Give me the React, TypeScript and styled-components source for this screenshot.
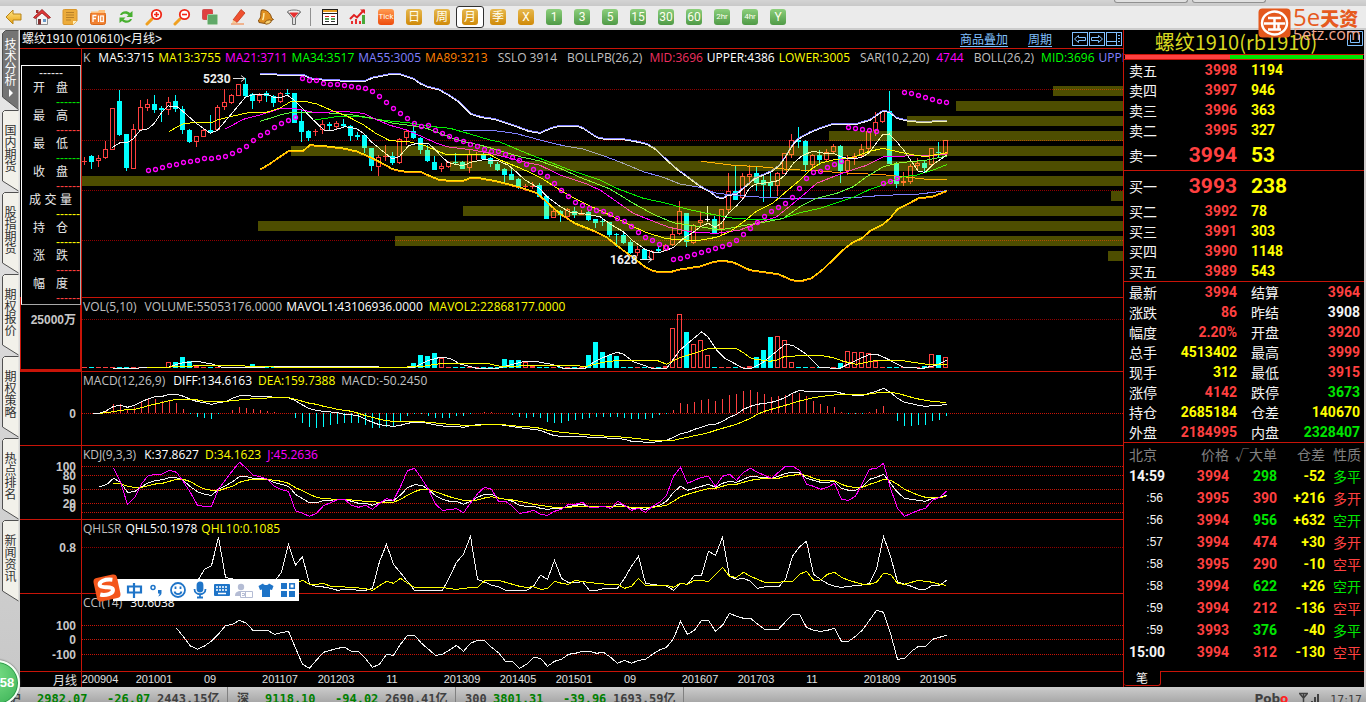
import React from 'react';
import styled, { createGlobalStyle } from 'styled-components';

const RED_LINE = '#c81408';
const UP = '#ff4040';
const DOWN = '#00e600';
const YELLOW = '#ffff00';
const WHITE = '#f4f4f4';
const GREY = '#c0c0c0';
const CYAN = '#00ffff';
const MAGENTA = '#ff00ff';
const BLUE = '#8080ff';
const CJK = "'Noto Sans CJK SC'";

const GlobalStyle = createGlobalStyle`
  * { box-sizing: border-box; }
  body {
    margin: 0;
    overflow: hidden;
    background: #c8c8c8;
    font-family: 'Liberation Sans', ${CJK}, sans-serif;
    font-size: 12px;
  }
  button { margin: 0; padding: 0; border: 0; background: none; font: inherit; color: inherit; }
  table { border-collapse: collapse; }
  th, td { padding: 0; font-weight: inherit; text-align: left; }
  svg { display: block; }
`;

/* ---------- series data: horizontal unit is one candle, vertical unit a third of a pixel ---------- */

type Candle = [kind: 'r' | 'c' | 'w', high: number, top: number, bottom: number, low: number];

const CANDLES: Candle[] = `r291,302,304,315 c284,288,306,327 r285,293,303,321 r243,267,293,298 r145,145,269,269
c90,123,225,228 c222,222,324,333 r192,206,328,328 r120,142,211,214 r117,132,143,153 c105,132,150,159 c138,143,150,186
r111,127,150,165 c105,123,147,156 c139,147,210,222 c208,210,246,249 r228,229,245,261 r207,211,230,232 c165,210,216,219
r135,142,211,213 r87,127,142,150 r102,106,128,132 r72,73,107,108 c54,72,108,112 c99,102,123,147 r99,104,122,129
c93,99,108,126 c105,108,129,141 r96,100,127,130 c87,99,102,108 c99,99,189,189 c150,183,216,246 c210,213,234,243
r207,214,217,228 r180,193,209,222 c186,192,198,213 r183,190,200,207 c177,192,198,201 c195,198,228,243 c216,225,231,240
c225,225,264,280 c264,264,318,333 r285,291,320,348 r255,289,292,303 c276,288,309,315 r234,238,308,312 r210,212,233,255
c195,213,234,237 c231,234,270,282 c255,270,303,306 c288,306,330,330 r309,318,326,336 r303,307,320,324 c279,305,309,312
c303,306,327,328 r270,283,325,339 r276,281,286,300 c280,282,297,300 c290,294,312,321 c307,312,330,333 c324,327,345,369
c327,342,360,361 c354,357,384,387 r372,378,381,393 r366,377,380,387 c369,375,410,411 c408,408,477,477 r440,453,473,474
c450,453,465,486 r445,448,471,474 c441,453,465,474 r450,458,464,465 c450,456,480,483 c477,477,489,504 c474,483,486,498
c486,486,525,531 c519,522,525,561 c513,525,549,552 c540,546,579,582 r558,568,578,588 c567,567,600,600 r570,572,599,600
c561,566,573,579 r553,554,572,573 r501,523,554,558 r423,454,521,525 c459,459,546,561 r492,495,548,552 r456,481,490,498
w438,476,480,486 c468,477,519,522 r447,448,508,525 r339,394,449,456 c318,393,420,420 r339,349,415,420 r315,343,352,375
c320,339,369,392 c348,360,375,426 c333,366,378,411 r336,340,377,408 r279,280,341,342 r222,241,284,294 c201,240,246,264
c240,243,315,336 r282,286,314,324 c270,285,300,315 r267,277,299,306 r252,259,277,282 c255,258,333,369 r285,300,334,345
r279,287,293,315 r252,268,289,294 r213,214,268,279 r156,187,214,228 r153,154,187,190 c93,153,312,312 c306,310,372,384
r336,364,370,378 r312,319,365,372 r294,310,318,330 c300,309,324,336 r264,265,315,318 c246,276,279,291 r240,241,283,288`
  .split(/\s+/)
  .map((s) => [s[0], ...s.slice(1).split(',').map(Number)] as unknown as Candle);

const PRICE_LINES: { color: string; dy?: number; d: string }[] = [
  { color: BLUE, d: '1149,212 1240,212 1260,214 1310,221 1380,240 1450,257 1510,267 1570,287 1630,310 1690,335 1750,352 1800,372 1860,382 1910,400 1960,405 2020,410 2110,415 2260,415 2320,413 2410,406 2510,403 2600,392' },
  { color: '#ff9000', d: '1863,304 1960,316 2040,320 2120,328 2220,333 2280,338 2410,344 2470,350 2540,358 2600,358' },
  { color: '#00f000', d: '706,180 780,168 840,170 920,182 1000,190 1060,200 1110,205 1170,222 1230,240 1260,246 1340,280 1410,307 1470,330 1560,360 1610,385 1690,415 1760,430 1820,447 1880,460 1960,475 2050,480 2100,478 2160,458 2220,445 2280,425 2320,412 2370,388 2400,378 2460,352 2510,345 2560,330 2600,314' },
  { color: '#60f840', d: '541,184 600,165 640,156 700,156 760,160 820,165 880,175 940,190 980,195 1040,205 1100,228 1140,242 1200,255 1260,272 1320,290 1380,303 1440,325 1500,352 1590,387 1660,430 1720,463 1780,488 1860,500 1920,510 2000,495 2060,485 2110,475 2160,440 2210,415 2270,400 2320,380 2360,350 2410,320 2460,308 2540,300 2600,288' },
  { color: MAGENTA, d: '436,207 490,178 540,165 600,146 640,145 700,157 800,155 850,160 880,175 930,196 980,210 1020,227 1070,250 1100,260 1180,270 1230,280 1260,287 1320,303 1380,316 1440,345 1520,372 1560,390 1610,425 1660,460 1710,480 1770,503 1840,517 1910,520 1980,510 2030,490 2090,470 2140,430 2170,405 2210,370 2260,350 2300,335 2360,316 2410,290 2600,284' },
  { color: YELLOW, d: '268,214 310,191 350,187 395,189 410,180 455,169 510,157 560,157 600,144 630,126 670,123 710,132 760,153 800,168 850,194 890,222 930,242 985,245 1030,255 1070,272 1100,284 1230,284 1260,300 1310,320 1340,333 1380,352 1440,390 1480,413 1535,440 1610,475 1660,500 1700,518 1760,536 1850,542 1910,532 1950,515 1990,486 2030,453 2080,428 2130,385 2160,360 2190,330 2220,310 2260,300 2320,292 2365,275 2408,265 2440,272 2490,283 2535,290 2600,278' },
  { color: WHITE, d: '97,262 120,248 140,249 160,236 181,211 205,206 223,190 244,159 265,138 290,139 310,155 330,173 349,190 391,220 412,211 433,187 454,162 475,137 496,112 517,105 560,102 580,112 600,113 622,106 640,118 664,142 700,180 733,211 755,212 795,200 830,206 850,220 874,245 916,280 937,297 958,290 985,258 1010,250 1045,250 1065,268 1085,290 1105,308 1147,317 1175,306 1210,299 1255,302 1285,316 1310,337 1335,360 1378,385 1399,408 1441,440 1470,456 1510,461 1560,470 1595,495 1630,515 1660,543 1695,568 1720,577 1740,577 1780,563 1810,535 1835,520 1865,498 1885,490 1905,502 1924,490 1945,460 1970,437 1990,415 2008,385 2025,373 2060,368 2095,362 2115,345 2140,310 2165,288 2197,274 2235,280 2265,282 2290,293 2320,297 2345,292 2365,280 2385,255 2408,224 2428,222 2450,245 2475,275 2495,305 2515,334 2535,337 2560,313 2600,285' },
];

const BOLL_UPPER = '541,42 563,39 590,42 668,42 690,53 710,56 780,60 840,62 858,60 878,51 920,43 940,39 962,42 1000,54 1020,68 1040,78 1075,86 1100,100 1135,122 1172,160 1205,170 1240,175 1260,181 1310,198 1345,211 1380,217 1410,204 1440,195 1490,195 1510,203 1550,230 1580,236 1635,237 1660,241 1700,250 1725,265 1760,298 1790,325 1820,347 1860,377 1890,393 1910,409 1928,414 1942,404 1970,400 2000,374 2025,353 2075,332 2098,315 2115,290 2140,250 2155,235 2190,215 2220,203 2260,190 2300,192 2335,189 2370,178 2410,150 2430,156 2450,172 2480,180 2515,184 2600,182';
const BOLL_LOWER = '541,327 570,310 600,289 625,272 668,272 690,254 740,258 790,264 830,273 870,290 900,305 935,325 960,332 1000,335 1025,336 1050,347 1075,357 1105,361 1150,361 1170,353 1190,352 1240,361 1260,365 1320,381 1370,398 1400,425 1440,460 1485,489 1540,511 1580,531 1630,570 1665,595 1690,616 1715,630 1740,636 1770,635 1800,627 1860,618 1900,605 1925,600 1960,606 2010,629 2095,641 2135,659 2160,663 2195,653 2225,630 2260,598 2290,568 2320,545 2345,534 2370,512 2410,491 2430,474 2452,447 2485,430 2515,414 2560,408 2600,392';
PRICE_LINES.push(
  { color: BLUE, dy: 0, d: BOLL_UPPER },
  { color: WHITE, dy: 1, d: BOLL_UPPER },
  { color: '#ff9000', dy: 1, d: BOLL_LOWER },
  { color: '#ffe000', dy: 0, d: BOLL_LOWER },
);

const SAR_START = 9;
const SAR = [331,328,322,316,312,307,304,301,295,293,292,287,279,271,259,241,226,215,200,190,179,170,55,60,61,68,71,73,76,79,82,85,94,109,127,145,160,175,189,197,196,209,218,229,238,243,252,259,268,273,274,281,292,300,313,326,337,349,370,391,409,425,436,443,451,452,463,475,484,499,515,530,541,553,562,598,595,589,583,577,571,565,559,553,541,523,505,487,469,454,442,430,412,385,355,335,334,322,313,304,202,205,208,211,214,368,362,353,95,100,106,112,118,124,127];

const PRICE_BANDS: [x: number, y: number][] = [
  [1053, 86], [956, 101], [907, 116], [829, 131], [291, 146], [450, 161], [82, 176], [1111, 191], [463, 206], [258, 221], [395, 236], [1108, 251],
];

const VOLUME: Record<number, number> = {
  12: 6, 13: 6, 14: 11, 15: 7, 16: 2, 24: 4, 25: 2, 36: 2, 38: 2, 47: 5, 48: 13, 49: 12, 50: 15, 51: 10, 60: 9, 61: 8, 62: 8, 63: 6, 64: 2,
  72: 13, 73: 26, 74: 16, 75: 13, 76: 12, 83: 2, 84: 40, 85: 54, 86: 36, 87: 24, 88: 28, 89: 13, 95: 2, 96: 11, 97: 18, 98: 31, 99: 32,
  100: 28, 101: 6, 108: 5, 109: 17, 110: 16, 111: 16, 112: 15, 113: 7, 120: 2, 121: 14, 122: 13, 123: 11,
};
const VOLUME_KIND: Record<number, 'r' | 'c'> = { 15: 'c', 63: 'r', 64: 'r', 88: 'r', 89: 'r' };
const MAVOL1 = '100,205 260,203 300,190 350,184 400,193 430,203 610,200 810,201 840,199 920,202 1000,203 1040,183 1080,172 1110,175 1140,192 1190,205 1250,206 1290,195 1330,185 1365,184 1420,194 1450,205 1515,205 1545,184 1580,168 1610,157 1630,162 1660,185 1690,195 1715,205 1760,205 1800,150 1865,95 1885,112 1910,150 1935,175 1990,205 2015,205 2050,187 2115,133 2138,136 2175,160 2220,203 2280,205 2310,190 2370,162 2390,163 2415,173 2470,202 2530,205 2570,195 2600,181';
const MAVOL2 = '200,204 340,198 450,196 540,200 620,202 900,203 1020,200 1080,191 1200,190 1230,192 1260,199 1450,196 1520,199 1570,187 1615,181 1730,181 1760,193 1800,173 1885,146 1970,146 1990,158 2015,176 2070,184 2090,180 2115,169 2220,166 2260,173 2290,184 2330,193 2390,181 2460,181 2500,187 2540,193 2600,193';

const DIFF = [340,340,332,319,316,322,316,305,296,290,289,283,283,289,298,305,308,313,308,305,295,287,286,289,289,289,292,292,293,302,315,326,331,334,336,338,343,344,348,358,367,374,377,379,376,370,367,367,370,375,378,379,379,382,377,374,374,374,374,376,380,383,386,388,391,400,407,409,409,409,409,412,412,413,415,415,418,424,424,427,427,424,421,412,401,397,388,382,374,373,364,352,343,328,319,313,310,307,301,292,280,271,274,274,274,274,274,280,284,286,286,280,274,265,277,295,307,311,316,319,317,316,313];
const DEA = [340,338,335,331,329,328,323,317,312,307,302,298,298,298,300,304,305,305,304,302,300,298,296,295,294,293,293,293,298,304,310,313,319,323,328,331,334,340,347,352,358,362,364,365,365,364,365,367,369,371,373,374,376,376,376,374,374,374,375,377,379,380,382,385,391,394,397,399,401,403,405,406,408,409,410,412,414,416,419,421,421,421,421,416,412,407,403,398,391,385,379,373,364,355,343,334,328,322,316,310,303,298,293,290,287,285,284,284,283,283,282,279,277,277,280,286,292,297,301,304,306,307];
const HIST = [0,0,0,2,9,9,4,6,11,14,14,12,12,10,4,-1,-4,-5,-6,-1,0,3,6,5,4,3,2,1,0,0,-5,-10,-14,-15,-14,-12,-11,-10,-10,-10,-12,-15,-15,-14,-13,-8,-3,-1,-1,-3,-5,-5,-5,-3,-3,-1,0,1,1,0,0,-2,-4,-5,-4,-5,-9,-10,-10,-8,-7,-6,-5,-4,-4,-4,-4,-5,-6,-6,-6,-5,-2,-1,3,10,9,11,13,14,12,14,18,19,22,23,21,19,16,17,18,19,20,17,12,9,7,6,1,-1,-1,-1,1,4,7,0,-8,-13,-13,-12,-12,-8,-7,-3];

const KDJ_K = [560,554,535,547,577,575,560,548,542,539,533,533,542,560,575,583,586,568,557,545,530,530,535,536,538,548,553,559,583,596,608,608,602,601,598,598,604,610,610,616,608,601,602,585,563,554,556,568,587,598,604,604,613,604,592,583,583,594,598,604,616,619,619,625,628,625,625,620,616,613,620,620,619,625,613,616,625,625,628,622,616,604,577,559,571,565,559,553,562,550,544,547,538,529,531,532,535,529,520,517,519,535,541,547,547,544,565,571,571,559,538,532,523,550,577,595,598,601,604,595,592,586];
const KDJ_D = [550,551,559,562,562,557,552,550,544,538,538,545,557,567,571,572,565,559,547,541,538,538,538,541,544,550,563,572,583,592,596,597,598,599,600,602,604,605,607,607,607,598,586,575,568,569,575,583,590,596,601,601,600,594,590,594,598,600,604,608,613,616,619,622,622,622,620,619,619,619,619,619,619,619,622,622,622,622,619,616,604,590,583,577,571,566,565,559,553,553,547,541,538,535,535,535,529,526,523,526,535,541,542,543,553,560,562,562,553,547,538,541,553,568,577,586,592,592,592,590];
const KDJ_J = [505,545,614,593,551,526,524,522,511,517,545,578,616,619,619,567,540,512,487,505,526,530,538,559,569,574,632,640,649,640,617,608,599,598,616,622,616,628,610,596,601,560,512,505,535,568,613,631,629,626,638,610,581,562,568,604,604,619,640,637,631,643,646,634,628,613,613,607,622,622,619,625,604,616,631,625,637,619,607,586,529,502,550,541,532,529,559,529,523,541,517,505,517,526,535,517,499,499,511,553,559,568,562,550,598,601,589,550,508,505,490,565,625,649,640,631,625,601,592,574];

const QHL5 = [865,843,808,797,712,832,837,860,862,862,862,860,845,817,733,795,770,852,860,861,865,871,868,868,871,871,865,785,733,793,818,845,871,871,871,871,871,832,787,763,709,838,846,856,860,871,871,871,871,859,826,838,781,835,848,848,845,871,871,866,866,865,835,799,769,850,853,856,858,871,850,853,826,826,754,766,712,829,838,835,844,865,861,859,861,838,769,740,724,823,838,851,859,862,859,857,855,850,808,709,769,846,853,859,868,868,856,856,841];
const QHL10 = [850,850,841,853,853,850,859,859,861,863,864,866,871,857,844,850,835,850,862,862,862,862,862,866,868,865,863,862,843,841,841,847,853,859,862,860,868,866,844,850,853,841,845,847,850,852,853,853,865,859,835,856,856,856,856,862,850,853,841,842,844,823,802,829,832,817,829,838,847,847,847,844,844,823,814,841,840,823,817,832,841,847,853,853,847,820,823,850,853,847,841,844,847,853,856];
const CCI = [985,1010,1038,1048,1038,1023,1002,977,973,961,970,993,991,991,1003,998,994,1044,1093,1105,1080,1057,1051,1045,1042,1054,1054,1076,1102,1093,1063,1066,1033,1006,1006,1030,1048,1066,1063,1050,1036,1054,1030,1021,1021,1042,1058,1084,1084,1105,1093,1072,1075,1099,1084,1078,1063,1060,1054,1054,1060,1057,1072,1090,1081,1090,1081,1078,1063,1050,1042,1016,964,1003,991,961,961,994,976,940,949,955,955,972,988,988,988,965,943,943,982,991,994,991,985,1024,1024,1009,990,961,931,937,1000,1078,1075,1054,1039,1039,1018,1012,1006];

const AXIS_DATES: [x: number, label: string][] = [
  [100, '200904'], [154, '201001'], [210, '09'], [280, '201107'], [336, '201203'], [392, '11'], [462, '201309'], [518, '201405'],
  [574, '201501'], [630, '09'], [700, '201607'], [756, '201703'], [812, '11'], [882, '201809'], [938, '201905'],
];

const candleX = (i: number) => 82 + 7 * i;
const lineX = (i: number) => 85 + 7 * i + 0.5;
const priceY = (v: number) => 60 + Math.round(v / 3);
const studyY = (v: number) => 300 + v / 3;

const seriesPoints = (start: number, values: number[]) =>
  values.map((v, k) => `${lineX(start + k)},${studyY(v).toFixed(1)}`).join(' ');
const freePoints = (d: string, base: number, dy = 0) =>
  d
    .split(' ')
    .map((p) => p.split(',').map(Number))
    .map(([x, y]) => `${(80 + x / 3).toFixed(1)},${(base + y / 3 + dy).toFixed(1)}`)
    .join(' ');

/* ---------- window frame ---------- */

const Window = styled.div`
  display: flex;
  flex-direction: column;
  height: 100vh;
`;
const TopEdge = styled.div`
  flex: 0 0 6px;
  display: flex;
  justify-content: flex-end;
  gap: 4px;
  padding-right: 100px;
  background: linear-gradient(#d4d4d4, #c8c8c8);
`;
const EdgeTab = styled.span`
  width: 74px;
  height: 3px;
  border: solid #909090;
  border-width: 0 1px 1px;
  border-radius: 0 0 4px 4px;
  background: #e0e0e0;
`;
const Toolbar = styled.header`
  flex: 0 0 24px;
  display: flex;
  background: #ebebeb;
  border-bottom: 2px solid #cccccc;
`;
const ToolButton = styled.button<{ $active?: boolean }>`
  width: 28px;
  height: 22px;
  display: flex;
  align-items: center;
  justify-content: center;
  border: 1px solid ${(p) => (p.$active ? '#303030' : 'transparent')};
  border-radius: 3px;
  background: ${(p) => (p.$active ? '#ffffff' : 'transparent')};
`;
const Divider = styled.span`
  width: 1px;
  margin: 2px 5px 2px 2px;
  background: #909090;
`;
const TILE_FILL = {
  gold: 'linear-gradient(#e6b84e, #d08a08)',
  green: 'linear-gradient(#8ccf7c, #4f9a46)',
  orange: 'linear-gradient(#ff9a50, #ee4c0c)',
};
const Tile = styled.span<{ $tone: keyof typeof TILE_FILL; $small?: boolean }>`
  width: 16px;
  height: 16px;
  border-radius: 3px;
  background: ${(p) => TILE_FILL[p.$tone]};
  color: #fffff0;
  font: ${(p) => (p.$small ? 8 : 12)}px/16px 'Roboto', ${CJK}, sans-serif;
  text-align: center;
  white-space: nowrap;
`;
const Body = styled.div`
  flex: 1;
  min-height: 0;
  display: flex;
  padding-right: 2px;
  background: #d0cccc;
`;

/* ---------- left tab rail ---------- */

const TabRail = styled.nav`
  flex: 0 0 20px;
  padding: 0 2px;
  background: linear-gradient(#e8e8e8, #c8c8c8);
`;
const SideTab = styled.button<{ $active?: boolean }>`
  position: relative;
  display: flex;
  flex-direction: column;
  align-items: center;
  width: 16px;
  height: ${(p) => (p.$active ? 80 : 82)}px;
  padding-top: ${(p) => (p.$active ? 8 : 14)}px;
  color: ${(p) => (p.$active ? '#ffffff' : '#303030')};
`;
const TabShape = styled.svg`
  position: absolute;
  inset: 0;
`;
const TabText = styled.span`
  position: relative;
  font: 12px/12px ${CJK}, sans-serif;
  writing-mode: vertical-rl;
`;

/* ---------- chart area ---------- */

const ChartWindow = styled.main`
  flex: 1;
  min-width: 0;
  display: flex;
  flex-direction: column;
  background: #000;
  color: ${GREY};
`;
const ChartTitle = styled.div`
  flex: 0 0 19px;
  display: flex;
  align-items: center;
  justify-content: space-between;
  padding: 0 1px 0 2px;
  border-bottom: 1px solid ${RED_LINE};
  font: 12px/18px ${CJK}, sans-serif;
`;
const Instrument = styled.h1`
  margin: 0;
  font: 12px/18px 'Liberation Sans', ${CJK}, sans-serif;
  color: ${WHITE};
`;
const TitleLinks = styled.div`
  display: flex;
  align-items: center;
  gap: 20px;
  color: #80c0ff;
  a { color: inherit; text-underline-offset: 2px; }
`;
const WindowButtons = styled.span`
  display: flex;
  gap: 1px;
  button { height: 14px; }
`;
const PanelRow = styled.section<{ $height?: number }>`
  flex: ${(p) => (p.$height ? `0 0 ${p.$height}px` : '1')};
  min-height: 0;
  display: flex;
  border-bottom: 1px solid ${RED_LINE};
`;
const AxisCell = styled.div<{ $selected?: boolean }>`
  position: relative;
  flex: 0 0 61px;
  border: ${(p) => (p.$selected ? `solid ${RED_LINE}` : 'none')};
  border-width: 0 1px 2px 1px;
`;
const Plot = styled.div`
  flex: 1;
  min-width: 0;
  min-height: 0;
  display: grid;
  grid-template-rows: minmax(0, 1fr);
  border-left: 1px solid ${RED_LINE};
  overflow: hidden;
  > * { grid-area: 1 / 1; }
`;
const Legend = styled.div`
  position: relative;
  z-index: 1;
  align-self: start;
  display: flex;
  padding-left: 1px;
  font: 12px/18px 'Open Sans', sans-serif;
  white-space: nowrap;
`;
const LegendItem = styled.span<{ $color?: string; $gap?: number }>`
  color: ${(p) => p.$color || GREY};
  margin-right: ${(p) => p.$gap || 4}px;
`;
const Drawing = styled.svg`
  width: 100%;
  height: 100%;
  min-height: 0;
`;
const AxisText = styled.text`
  fill: #c8c8c8;
  font: bold 12px 'Liberation Sans', ${CJK}, sans-serif;
  text-anchor: end;
`;
const PriceTag = styled.text`
  fill: #f0f0f0;
  font: bold 12px 'Roboto', sans-serif;
`;
const DateRow = styled.div`
  flex: 0 0 15px;
  min-height: 0;
  display: flex;
`;
const DateCaption = styled.div`
  flex: 0 0 61px;
  padding-right: 4px;
  text-align: right;
  font: 12px/15px ${CJK}, sans-serif;
  color: #e0e0e0;
`;
const DateText = styled.text`
  fill: #e0e0e0;
  font: 11px 'Liberation Sans', sans-serif;
  text-anchor: middle;
`;

/* ---------- floating data box ---------- */

const DataBox = styled.div`
  position: absolute;
  z-index: 2;
  left: 1px;
  top: 16px;
  width: 60px;
  height: 240px;
  border: 1px solid;
  border-color: #ffffff #a8a8a8 #a8a8a8 #ffffff;
  background: #000;
  color: #e8e8e8;
  font: 12px/14px 'Liberation Sans', ${CJK}, sans-serif;
`;
const Dashes = styled.div<{ $color?: string; $center?: boolean }>`
  line-height: ${(p) => (p.$center ? 14 : 12)}px;
  color: ${(p) => p.$color || '#e8e8e8'};
  text-align: ${(p) => (p.$center ? 'center' : 'right')};
`;
const DataLabel = styled.div`
  display: flex;
  justify-content: space-between;
  width: 43px;
  margin-left: 7px;
  padding: 0 4px;
  line-height: 16px;
  &[data-wide='true'] { padding: 0; }
`;

/* ---------- quote panel ---------- */

const QuotePanel = styled.aside`
  flex: 0 0 241px;
  display: flex;
  flex-direction: column;
  background: #000;
  border-left: 1px solid ${RED_LINE};
  color: ${WHITE};
`;
const QuoteTitle = styled.h2`
  position: relative;
  margin: 0;
  flex: 0 0 24px;
  padding-right: 16px;
  font: 20px/24px ${CJK}, sans-serif;
  color: #d8d820;
  text-align: center;
`;
const RestoreButton = styled.button`
  position: absolute;
  right: 1px;
  top: 1px;
`;
const RatioBar = styled.div`
  flex: 0 0 6px;
  display: flex;
  padding: 0 1px;
  border: solid ${RED_LINE};
  border-width: 1px 0;
`;
const RatioPart = styled.span<{ $grow: number; $color: string }>`
  flex: ${(p) => p.$grow};
  background: ${(p) => p.$color};
`;
const QuoteTable = styled.table`
  width: 100%;
  table-layout: fixed;
  border-bottom: 1px solid ${RED_LINE};
  font: bold 14px/20px 'Roboto', sans-serif;
  th { font: 14px/20px ${CJK}, sans-serif; padding-left: 5px; }
  td + th { padding-left: 14px; }
`;
const QuoteRow = styled.tr<{ $large?: boolean }>`
  height: ${(p) => (p.$large ? 30 : 20)}px;
  td { font-size: ${(p) => (p.$large ? 21 : 14)}px; }
`;
const Figure = styled.td<{ $color: string; $left?: boolean }>`
  color: ${(p) => p.$color};
  && { text-align: ${(p) => (p.$left ? 'left' : 'right')}; }
  padding-left: ${(p) => (p.$left ? 14 : 0)}px;
  white-space: nowrap;
`;
const TickTable = styled.table`
  width: 100%;
  table-layout: fixed;
  font: bold 14px/22px 'Roboto', sans-serif;
  tr { height: 22px; }
  th { font: 14px/22px ${CJK}, sans-serif; color: #808080; text-align: right; white-space: nowrap; }
  th:first-child { text-align: left; padding-left: 5px; }
`;
const TimeCell = styled.td<{ $minor?: boolean }>`
  && { text-align: ${(p) => (p.$minor ? 'right' : 'left')}; }
  padding-left: 5px;
  font: ${(p) => (p.$minor ? "12px/22px 'Liberation Sans'" : "bold 14px/22px 'Roboto'")}, sans-serif;
`;
const NatureCell = styled.td<{ $color: string }>`
  && { text-align: right; }
  padding-right: 3px;
  font: 14px/22px ${CJK}, sans-serif;
  color: ${(p) => p.$color};
`;
const QuoteTabs = styled.div`
  flex: 0 0 16px;
  margin-top: auto;
  display: flex;
`;
const QuoteTab = styled.button`
  width: 37px;
  height: 15px;
  border: solid ${RED_LINE};
  border-width: 0 1px 1px 0;
  border-radius: 0 0 3px 3px;
  font: 12px/14px ${CJK}, sans-serif;
  color: ${WHITE};
`;
const TabLine = styled.span`
  flex: 1;
  border-top: 1px solid ${RED_LINE};
`;

/* ---------- status bar ---------- */

const StatusBar = styled.footer`
  flex: 0 0 15px;
  height: 15px;
  overflow: hidden;
  display: flex;
  justify-content: space-between;
  padding: 0 4px 0 9px;
  background: linear-gradient(#cccccc, #a8a8a8);
  color: #404040;
  font: bold 12px/25px 'DejaVu Sans Mono', ${CJK}, monospace;
`;
const IndexList = styled.div`
  display: flex;
  gap: 9px;
`;
const IndexGroup = styled.div`
  display: grid;
  grid-template-columns: 28px 70px 50px 60px;
  width: 219px;
  height: 25px;
  white-space: nowrap;
  border-right: 1px solid #808080;
`;
const Green = styled.span`
  color: #008000;
`;
const Brand = styled.span`
  display: flex;
  align-items: flex-start;
  gap: 10px;
  font-family: 'DejaVu Sans', sans-serif;
  i { font-style: normal; color: #ff2020; }
  svg { margin-top: 5px; }
  time { font-weight: normal; font-size: 11px; }
`;

/* ---------- things floating above the window ---------- */

const SiteMark = styled.div`
  position: absolute;
  z-index: 5;
  right: 4px;
  top: 8px;
  display: flex;
  gap: 2px;
  color: #e65a1e;
`;
const MarkText = styled.div`
  width: 69px;
  font: 20px/18px 'Open Sans', ${CJK}, sans-serif;
  white-space: nowrap;
  small { display: block; font: 16px/12px 'Open Sans', sans-serif; color: #f0a890; }
  b { font: 900 19px/18px ${CJK}, sans-serif; }
  span { font-size: 24px; }
`;
const ImeBar = styled.div`
  position: absolute;
  z-index: 4;
  left: 93px;
  bottom: 101px;
  width: 206px;
  height: 22px;
  padding-left: 30px;
  display: flex;
  background: linear-gradient(to right, transparent 20px, #ffffff 20px);
  color: #1e74c8;
`;
const ImeButton = styled.button`
  width: 22px;
  height: 22px;
  display: flex;
  align-items: center;
  justify-content: center;
`;
const ImeLogo = styled.svg`
  position: absolute;
  left: -1px;
  top: -6px;
`;
const SpeedBall = styled.button`
  position: absolute;
  z-index: 4;
  left: -26px;
  bottom: -4px;
  width: 46px;
  height: 46px;
  padding-left: 20px;
  border: 2px solid #f4fff4;
  border-radius: 50%;
  box-shadow: 0 0 2px #404040, inset 0 0 0 1px #2c9a48;
  background: radial-gradient(circle at 40% 30%, #7ce088, #38b054);
  color: #ffffff;
  font: bold 13px/42px 'Liberation Sans', sans-serif;
`;

/* ---------- toolbar icons ---------- */

const Icon = ({ children }: { children: React.ReactNode }) => (
  <svg width="18" height="18" viewBox="0 0 18 18" aria-hidden="true">
    <defs>
      <linearGradient id="gold" x1="0" y1="0" x2="0" y2="1">
        <stop offset="0" stopColor="#ffe88a" />
        <stop offset="1" stopColor="#e8a010" />
      </linearGradient>
    </defs>
    {children}
  </svg>
);

const Magnifier = ({ plus }: { plus?: boolean }) => (
  <Icon>
    <path d="M2 16 L7 11" stroke="#f0a020" strokeWidth="3" strokeLinecap="round" />
    <circle cx="11.5" cy="6.5" r="4.7" fill="#fff" stroke="#f02818" strokeWidth="1.8" />
    <path d={plus ? 'M9 6.5H14M11.5 4V9' : 'M9 6.5H14'} stroke="#f02818" strokeWidth="1.6" />
  </Icon>
);

const ICONS: [string, React.ReactNode][] = [
  ['后退', <Icon><path d="M1 9 L8 2 V6 H16 V12 H8 V16 Z" fill="url(#gold)" stroke="#b88418" /></Icon>],
  ['首页', <Icon>
    <path d="M3.500 8.500V16.500H14.500V8.500L9 4Z" fill="#f4f4f4" stroke="#909090" />
    <path d="M3 2H5.500V5H3Z" fill="#a02828" />
    <path d="M0.500 9.500 L9 1.500 L17.500 9.500 L15.500 10.500 L9 5 L2.500 10.500Z" fill="#e03838" stroke="#901818" strokeWidth=".8" />
    <path d="M5 11H8V16.500H5Z" fill="#803030" /><path d="M10 11H13V14H10Z" fill="#6898c8" />
  </Icon>],
  ['公告', <Icon>
    <path d="M2 2.500C2 1.500 3 1.500 3.500 1.500H15C16 1.500 16 2.500 16 3V13L12 16.500H3C2 16.500 2 15.500 2 15Z" fill="#ecac3c" stroke="#d8962c" />
    <path d="M5 4.500H13M5 7H13M5 9.500H13M5 12H10" stroke="#b88028" />
    <path d="M16 13H12V16.500Z" fill="#fff0c0" />
  </Icon>],
  ['F10', <Icon>
    <rect x="1.500" y="4.500" width="15" height="12" rx="2" fill="#f08030" stroke="#d86818" />
    <path d="M2 3.500 H9 L10 2 H16V5H2Z" fill="#ffc078" />
    <path d="M4 14V7.500H7.500M4 10.500H7M9.500 14V7.500" stroke="#fff" strokeWidth="1.300" fill="none" />
    <rect x="11.700" y="8" width="2.600" height="5.500" stroke="#fff" fill="none" strokeWidth="1.200" />
  </Icon>],
  ['刷新', <Icon>
    <path d="M3 7 C4 3 10 2 13 5 L15.500 3V9H9.500L11.500 7 C9 5 6 5.500 5 7Z" fill="#48b030" />
    <path d="M15 11 C14 15 8 16 5 13 L2.500 15V9.500H8.500L6.500 11.500 C9 13.500 12 12.500 13 11Z" fill="#48b030" />
  </Icon>],
  ['放大', <Magnifier plus />],
  ['缩小', <Magnifier />],
  ['叠加', <Icon>
    <rect x="1.500" y="1.500" width="10" height="10" rx="1" fill="#e04040" stroke="#d05050" />
    <rect x="6.500" y="6.500" width="10" height="10" rx="1" fill="#60a868" stroke="#a8d0a8" />
  </Icon>],
  ['画线', <Icon>
    <path d="M4 12 L12 1.500 L16 5 L8 14.500Z" fill="#f05030" stroke="#c03818" strokeWidth=".8" />
    <path d="M4 12L3 15.500L8 14.500Z" fill="#f8c890" />
    <path d="M2 16H15" stroke="#f0a070" strokeWidth="1.500" />
  </Icon>],
  ['预警', <Icon>
    <path d="M4.500 2 C9 1 14 5 14.500 10 L16.500 11.500 L8 15.500 L2 14.500 L1.500 12 C5 10 3 5 4.500 2Z" fill="#e09020" stroke="#885010" />
    <path d="M7 5C6.500 8 7 10 5.500 12" stroke="#ffe8a0" strokeWidth="1.500" fill="none" />
    <ellipse cx="11" cy="14" rx="3.500" ry="1.800" fill="#f8d070" stroke="#885010" strokeWidth=".8" transform="rotate(-22 11 14)" />
  </Icon>],
  ['筛选', <Icon>
    <path d="M2.500 4 L7.500 10V16.500H10.500V10L15.500 4Z" fill="#e0e0e0" stroke="#707070" />
    <ellipse cx="9" cy="4" rx="6.500" ry="2" fill="#f0f0f0" stroke="#707070" />
    <path d="M4.500 4.500H13.500L9.500 9.500H8.500Z" fill="#e83030" />
  </Icon>],
];

const CHART_ICONS: [string, React.ReactNode][] = [
  ['报价', <Icon>
    <rect x="1.500" y="1.500" width="15" height="15" fill="#fff" stroke="#202020" />
    <path d="M2 3H16" stroke="#e8a020" strokeWidth="2" />
    <path d="M2 5.500H16" stroke="#202020" />
    <path d="M4 8.500H8M10 8.500H14" stroke="#d02020" /><path d="M4 11H8M10 11H14" stroke="#209020" strokeWidth="1.500" />
    <path d="M4 13.500H8M10 13.500H14" stroke="#303030" />
  </Icon>],
  ['走势', <Icon>
    <path d="M2 16V13H4V16M6 16V11H8V16M10 16V13H12V16" fill="#e83030" /><path d="M13 16V7H16V16Z" fill="#48a838" />
    <path d="M1 11 L5 7 L8 9.500 L15 2" fill="none" stroke="#e02020" strokeWidth="2" /><path d="M11 1.500H16V6Z" fill="#e02020" />
  </Icon>],
];

const PERIODS: [string, keyof typeof TILE_FILL][] = [
  ['Tick', 'orange'], ['日', 'gold'], ['周', 'gold'], ['月', 'gold'], ['季', 'gold'], ['X', 'gold'],
  ['1', 'green'], ['3', 'green'], ['5', 'green'], ['15', 'green'], ['30', 'green'], ['60', 'green'], ['2hr', 'green'], ['4hr', 'green'], ['Y', 'green'],
];

const SIDE_TABS = ['技术分析', '国内期货', '股指期货', '期权报价', '期权策略', '热点排名', '新闻资讯'];

const DATA_ROWS: [string, string][] = [
  ['开盘', '#00e600'], ['最高', UP], ['最低', '#00e600'], ['收盘', UP], ['成交量', YELLOW], ['持仓', YELLOW], ['涨跌', UP], ['幅度', UP],
];

const ASKS = [['卖五', '3998', '1194'], ['卖四', '3997', '946'], ['卖三', '3996', '363'], ['卖二', '3995', '327'], ['卖一', '3994', '53']];
const BIDS = [['买一', '3993', '238'], ['买二', '3992', '78'], ['买三', '3991', '303'], ['买四', '3990', '1148'], ['买五', '3989', '543']];
const STATS: [string, string, string, string, string, string][] = [
  ['最新', '3994', UP, '结算', '3964', UP],
  ['涨跌', '86', UP, '昨结', '3908', WHITE],
  ['幅度', '2.20%', UP, '开盘', '3920', UP],
  ['总手', '4513402', YELLOW, '最高', '3999', UP],
  ['现手', '312', YELLOW, '最低', '3915', UP],
  ['涨停', '4142', UP, '跌停', '3673', DOWN],
  ['持仓', '2685184', YELLOW, '仓差', '140670', YELLOW],
  ['外盘', '2184995', UP, '内盘', '2328407', DOWN],
];
const TICKS: [string, string, string, string, string, string][] = [
  ['14:59', '3994', '298', DOWN, '-52', '多平'],
  [':56', '3995', '390', UP, '+216', '多开'],
  [':56', '3994', '956', DOWN, '+632', '空开'],
  [':57', '3994', '474', UP, '+30', '多开'],
  [':58', '3995', '290', UP, '-10', '空平'],
  [':58', '3994', '622', DOWN, '+26', '空开'],
  [':59', '3994', '212', UP, '-136', '空平'],
  [':59', '3993', '376', DOWN, '-40', '多平'],
  ['15:00', '3994', '312', UP, '-130', '空平'],
];
const INDICES = [
  ['沪', '2982.07', '-26.07', '2443.15亿'],
  ['深', '9118.10', '-94.02', '2690.41亿'],
  ['300', '3801.31', '-39.96', '1693.59亿'],
];

/* ---------- charts ---------- */

const Grid = ({ ys, strong }: { ys: number[]; strong?: boolean }) => (
  <g stroke={strong ? '#c81408' : '#900000'} strokeDasharray="1 1" shapeRendering="crispEdges">
    {ys.map((y) => <line key={y} x1="82" x2="4000" y1={y + 0.5} y2={y + 0.5} />)}
  </g>
);

const Line = ({ color, points }: { color: string; points: string }) => (
  <polyline points={points} fill="none" stroke={color} strokeWidth="1" shapeRendering="crispEdges" />
);

const Frame = ({ top, label, children }: { top: number; label: string; children: React.ReactNode }) => (
  <Drawing role="img" aria-label={label}>
    <g transform={`translate(-82 ${-top})`}>{children}</g>
  </Drawing>
);

const PriceChart = () => (
  <Frame top={49} label="K线图">
    <Grid ys={[89, 140, 190, 240]} />
    <g shapeRendering="crispEdges">
      {CANDLES.map(([kind, h, t, b, l], i) => {
        const color = kind === 'r' ? UP : kind === 'c' ? CYAN : '#ffffff';
        const x = candleX(i);
        const [yh, yt, yb, yl] = [h, t, b, l].map(priceY);
        const height = Math.max(1, yb - yt);
        return (
          <g key={i}>
            {yt > yh && <rect x={x + 2} y={yh} width="1" height={yt - yh} fill={color} />}
            {yl > yb && <rect x={x + 2} y={yb} width="1" height={yl - yb} fill={color} />}
            {kind === 'r' && height > 2
              ? <rect x={x + 0.5} y={yt + 0.5} width="4" height={height - 1} fill="none" stroke={color} />
              : <rect x={x} y={yt} width="5" height={height} fill={color} />}
          </g>
        );
      })}
    </g>
    {PRICE_LINES.map((l, i) => <Line key={i} color={l.color} points={freePoints(l.d, 60, l.dy)} />)}
    <g fill="rgba(255,255,0,0.3)">
      {PRICE_BANDS.map(([x, y]) => <rect key={y} x={x} y={y} width="4000" height="10" />)}
    </g>
    <g fill="none" stroke={MAGENTA} strokeWidth="1.3">
      {SAR.map((v, k) => <circle key={k} cx={lineX(SAR_START + k)} cy={priceY(v) + 0.5} r="2" />)}
    </g>
    <PriceTag x="203" y="83">5230</PriceTag>
    <path d="M233 78.500H245M241 75.500L245 78.500L241 81.500" stroke="#e0e0e0" fill="none" />
    <PriceTag x="610" y="264">1628</PriceTag>
    <path d="M640 259.500H652M648 256.500L652 259.500L648 262.500" stroke="#e0e0e0" fill="none" />
  </Frame>
);

const VolumeChart = () => (
  <Frame top={298} label="成交量">
    <Grid ys={[319]} />
    <g shapeRendering="crispEdges">
      {CANDLES.map(([candleKind], i) => {
        const kind = VOLUME_KIND[i] || candleKind;
        const color = kind === 'r' ? UP : CYAN;
        const h = VOLUME[i] || 1;
        return kind === 'r' && h > 2
          ? <rect key={i} x={candleX(i) + 0.5} y={368.5 - h} width="4" height={h - 1} fill="none" stroke={color} />
          : <rect key={i} x={candleX(i)} y={368 - h} width="5" height={h} fill={color} />;
      })}
    </g>
    <Line color={WHITE} points={freePoints(MAVOL1, 300)} />
    <Line color={YELLOW} points={freePoints(MAVOL2, 300)} />
  </Frame>
);

const MacdChart = () => (
  <Frame top={372} label="MACD">
    <Grid ys={[413]} strong />
    <g shapeRendering="crispEdges">
      {HIST.map((h, i) => (h === 0 ? null : (
        <rect key={i} x={85 + 7 * i} y={h > 0 ? 413 - h : 413} width="1" height={Math.abs(h)} fill={h > 0 ? UP : CYAN} />
      )))}
    </g>
    <Line color={WHITE} points={seriesPoints(1, DIFF)} />
    <Line color={YELLOW} points={seriesPoints(2, DEA)} />
  </Frame>
);

const KdjChart = () => (
  <Frame top={446} label="KDJ">
    <Grid ys={[466, 475, 489, 503, 512]} strong />
    <Line color={WHITE} points={seriesPoints(2, KDJ_K)} />
    <Line color={YELLOW} points={seriesPoints(4, KDJ_D)} />
    <Line color={MAGENTA} points={seriesPoints(4, KDJ_J)} />
  </Frame>
);

const QhlsrChart = () => (
  <Frame top={520} label="QHLSR">
    <Grid ys={[547]} />
    <Line color={WHITE} points={seriesPoints(15, QHL5)} />
    <Line color={YELLOW} points={seriesPoints(29, QHL10)} />
  </Frame>
);

const CciChart = () => (
  <Frame top={594} label="CCI">
    <Grid ys={[625, 639, 654]} strong />
    <Line color={WHITE} points={seriesPoints(13, CCI)} />
  </Frame>
);

type LegendEntry = [text: string, color?: string, gapAfter?: number];

const LEGENDS: Record<string, LegendEntry[]> = {
  k: [
    ['K', GREY, 8], ['MA5:3715', '#ffffff'], ['MA13:3755', YELLOW], ['MA21:3711', MAGENTA], ['MA34:3517', '#00ff00'], ['MA55:3005', BLUE],
    ['MA89:3213', '#ff8000', 10], ['SSLO 3914', GREY, 10], ['BOLLPB(26,2)', GREY, 7], ['MID:3696', '#f03060'], ['UPPER:4386', '#ffffff'],
    ['LOWER:3005', YELLOW, 10], ['SAR(10,2,20)', GREY, 7], ['4744', MAGENTA, 10], ['BOLL(26,2)', GREY, 7], ['MID:3696', '#00ff00'],
    ['UPPER:4386', BLUE],
  ],
  vol: [['VOL(5,10)', GREY, 8], ['VOLUME:55053176.0000'], ['MAVOL1:43106936.0000', '#ffffff', 6], ['MAVOL2:22868177.0000', YELLOW]],
  macd: [['MACD(12,26,9)', GREY, 8], ['DIFF:134.6163', '#ffffff', 6], ['DEA:159.7388', YELLOW, 6], ['MACD:-50.2450']],
  kdj: [['KDJ(9,3,3)', GREY, 8], ['K:37.8627', '#ffffff', 6], ['D:34.1623', YELLOW, 6], ['J:45.2636', MAGENTA]],
  qhlsr: [['QHLSR'], ['QHL5:0.1978', '#ffffff'], ['QHL10:0.1085', YELLOW]],
  cci: [['CCI(14)', GREY, 8], ['30.6038', '#ffffff']],
};

interface PanelProps {
  height?: number;
  legend: string;
  ticks?: [y: number, label: string][];
  selected?: boolean;
  side?: React.ReactNode;
  children: React.ReactNode;
}

const Panel = ({ height, legend, ticks = [], selected, side, children }: PanelProps) => (
  <PanelRow $height={height}>
    <AxisCell $selected={selected}>
      {side || (
        <Drawing aria-hidden="true">
          {ticks.map(([y, label]) => <AxisText key={label} x={selected ? 55 : 56} y={y}>{label}</AxisText>)}
        </Drawing>
      )}
    </AxisCell>
    <Plot>
      <Legend>
        {LEGENDS[legend].map(([text, color, gap], i) => <LegendItem key={i} $color={color} $gap={gap}>{text}</LegendItem>)}
      </Legend>
      {children}
    </Plot>
  </PanelRow>
);

const DataReadout = () => (
  <DataBox>
    <Dashes $center>------</Dashes>
    {DATA_ROWS.map(([label, color]) => (
      <React.Fragment key={label}>
        <DataLabel data-wide={label.length > 2}>
          {label.split('').map((ch) => <span key={ch}>{ch}</span>)}
        </DataLabel>
        <Dashes $color={color}>------</Dashes>
      </React.Fragment>
    ))}
  </DataBox>
);

const Columns = ({ widths }: { widths: number[] }) => (
  <colgroup>
    {widths.map((w, i) => <col key={i} width={w} />)}
    <col />
  </colgroup>
);

export default function App() {
  return (
    <Window>
      <GlobalStyle />
      <TopEdge><EdgeTab /><EdgeTab /></TopEdge>
      <Toolbar>
        {ICONS.map(([name, icon]) => <ToolButton key={name} aria-label={name}>{icon}</ToolButton>)}
        <Divider />
        {CHART_ICONS.map(([name, icon]) => <ToolButton key={name} aria-label={name}>{icon}</ToolButton>)}
        {PERIODS.map(([label, tone]) => (
          <ToolButton key={label} $active={label === '月'}>
            <Tile $tone={tone} $small={label.length > 2}>{label}</Tile>
          </ToolButton>
        ))}
      </Toolbar>

      <Body>
        <TabRail>
          {SIDE_TABS.map((name, i) => (
            <SideTab key={name} $active={i === 0}>
              <TabShape width="17" height="82" aria-hidden="true">
                <path
                  d={i === 0 ? 'M16.500 0.500H3.500L0.500 3.500V67L16.500 79.500' : 'M16.500 0.500H2.500L0.500 2.500V71L16.500 81'}
                  fill={i === 0 ? '#747474' : '#f2f1ea'}
                  stroke="#505050"
                />
                {i === 0 && <path d="M7 59L11 63L7 67Z" fill="#ffffff" />}
              </TabShape>
              <TabText>{name}</TabText>
            </SideTab>
          ))}
        </TabRail>

        <ChartWindow>
          <ChartTitle>
            <Instrument>螺纹1910 (010610)&lt;月线&gt;</Instrument>
            <TitleLinks>
              <a href="#overlay">商品叠加</a>
              <a href="#period">周期</a>
              <WindowButtons>
                <button aria-label="向左">
                  <svg width="16" height="14" fill="none" stroke="#80c0ff">
                    <rect x=".5" y=".5" width="15" height="13" />
                    <path d="M2.500 7L6.500 3.500V5.500H13.500V8.500H6.500V10.500Z" />
                  </svg>
                </button>
                <button aria-label="向右">
                  <svg width="16" height="14" fill="none" stroke="#80c0ff">
                    <rect x=".5" y=".5" width="15" height="13" />
                    <path d="M13.500 7L9.500 3.500V5.500H2.500V8.500H9.500V10.500Z" />
                  </svg>
                </button>
                <button aria-label="布局">
                  <svg width="16" height="14" fill="none" stroke="#80c0ff">
                    <rect x=".5" y=".5" width="15" height="13" />
                    <path d="M10.500 0V14M0 9.500H10M12 3.500H14M12 6.500H14M12 9.500H14" />
                  </svg>
                </button>
              </WindowButtons>
            </TitleLinks>
          </ChartTitle>

          <Panel legend="k" side={<DataReadout />}><PriceChart /></Panel>
          <Panel height={74} legend="vol" selected ticks={[[26, '25000万']]}><VolumeChart /></Panel>
          <Panel height={74} legend="macd" ticks={[[46, '0']]}><MacdChart /></Panel>
          <Panel height={74} legend="kdj" ticks={[[25, '100'], [34, '80'], [48, '50'], [62, '20'], [66, '0']]}><KdjChart /></Panel>
          <Panel height={74} legend="qhlsr" ticks={[[32, '0.8']]}><QhlsrChart /></Panel>
          <Panel height={78} legend="cci" ticks={[[36, '100'], [50, '0'], [65, '-100']]}><CciChart /></Panel>
          <DateRow>
            <DateCaption>月线</DateCaption>
            <Plot>
              <Drawing role="img" aria-label="日期">
                {AXIS_DATES.map(([x, label]) => <DateText key={x} x={x - 82} y="11">{label}</DateText>)}
              </Drawing>
            </Plot>
          </DateRow>
        </ChartWindow>

        <QuotePanel>
          <QuoteTitle>
            螺纹1910(rb1910)
            <RestoreButton aria-label="还原">
              <svg width="16" height="15" fill="none" stroke="#80c0ff">
                <path d="M.5 .5H15.500V14.500H.5ZM3.500 3.500V11.500H12.500V3.500" />
              </svg>
            </RestoreButton>
          </QuoteTitle>
          <RatioBar>
            <RatioPart $grow={105} $color={UP} />
            <RatioPart $grow={133} $color={DOWN} />
          </RatioBar>
          {[ASKS, BIDS].map((side, s) => (
            <QuoteTable key={s}>
              <Columns widths={[52, 61]} />
              <tbody>
                {side.map(([label, price, qty]) => (
                  <QuoteRow key={label} $large={label.endsWith('一')}>
                    <th scope="row">{label}</th>
                    <Figure $color={UP}>{price}</Figure>
                    <Figure $color={YELLOW} $left>{qty}</Figure>
                  </QuoteRow>
                ))}
              </tbody>
            </QuoteTable>
          ))}
          <QuoteTable>
            <Columns widths={[45, 68, 54, 69]} />
            <tbody>
              {STATS.map(([a, av, ac, b, bv, bc]) => (
                <QuoteRow key={a}>
                  <th scope="row">{a}</th>
                  <Figure $color={ac}>{av}</Figure>
                  <th scope="row">{b}</th>
                  <Figure $color={bc}>{bv}</Figure>
                  <td />
                </QuoteRow>
              ))}
            </tbody>
          </QuoteTable>
          <TickTable>
            <Columns widths={[39, 66, 48, 48]} />
            <thead>
              <tr>
                <th scope="col">北京</th>
                <th scope="col">价格</th>
                <th scope="col">√大单</th>
                <th scope="col">仓差</th>
                <NatureCell as="th" scope="col" $color="#808080">性质</NatureCell>
              </tr>
            </thead>
            <tbody>
              {TICKS.map(([time, price, qty, color, delta, nature], i) => (
                <tr key={i}>
                  <TimeCell $minor={time.startsWith(':')}>{time}</TimeCell>
                  <Figure $color={UP}>{price}</Figure>
                  <Figure $color={color}>{qty}</Figure>
                  <Figure $color={YELLOW}>{delta}</Figure>
                  <NatureCell $color={color}>{nature}</NatureCell>
                </tr>
              ))}
            </tbody>
          </TickTable>
          <QuoteTabs>
            <QuoteTab>笔</QuoteTab>
            <TabLine />
          </QuoteTabs>
        </QuotePanel>
      </Body>

      <StatusBar>
        <IndexList>
          {INDICES.map(([name, value, change, amount]) => (
            <IndexGroup key={name}>
              <span>{name}</span>
              <Green>{value}</Green>
              <Green>{change}</Green>
              <span>{amount}</span>
            </IndexGroup>
          ))}
        </IndexList>
        <Brand>
          <b>Pob<i>o</i></b>
          <svg width="22" height="14" aria-hidden="true">
            <path d="M1 1.500H10M2 2L5.500 6L9 2M5.500 2V12" stroke="#404040" strokeWidth="1.500" fill="none" />
            <path d="M13 9H15V13H13ZM16 5H18V13H16ZM19 2H21V13H19Z" fill="#404040" />
          </svg>
          <time>17:17</time>
        </Brand>
      </StatusBar>

      <SiteMark>
        <svg width="33" height="30" aria-hidden="true">
          <rect x=".5" y=".5" width="32" height="29" rx="4" fill="#e4581c" />
          <ellipse cx="16.500" cy="15" rx="12.500" ry="11.500" fill="none" stroke="#fff" strokeWidth="2.500" />
          <path d="M10 10H23M6 15.500H27M16.500 10V21M10 21.500H23M20.500 15V21" stroke="#fff" strokeWidth="2.500" fill="none" />
        </svg>
        <MarkText><span>5e</span><b>天资</b><small>5etz.com</small></MarkText>
      </SiteMark>

      <ImeBar>
        <ImeLogo width="30" height="30" aria-hidden="true">
          <g transform="rotate(-12 15 15)">
            <rect x="3" y="3" width="24" height="24" rx="4" fill="#f4561c" />
            <path d="M22 8 C15 5.500 8 7 8.500 11 C9 15 20.500 13 20.500 17.500 C20.500 22 12 22.500 7 20" fill="none" stroke="#fff" strokeWidth="4" />
          </g>
        </ImeLogo>
        <ImeButton aria-label="中文">
          <svg width="18" height="18" fill="none" stroke="currentColor" strokeWidth="2.200">
            <path d="M9 2V17M3 5.500H16V11.500H3Z" />
          </svg>
        </ImeButton>
        <ImeButton aria-label="标点">
          <svg width="16" height="18">
            <circle cx="5" cy="6.500" r="2" fill="none" stroke="currentColor" strokeWidth="1.500" />
            <path d="M10 9H13.500V12C13.500 14 12 15 10 15.500C11.500 14 11.500 13.500 11.500 12.500H10Z" fill="currentColor" />
          </svg>
        </ImeButton>
        <ImeButton aria-label="表情">
          <svg width="18" height="18" fill="none" stroke="currentColor" strokeWidth="1.800">
            <circle cx="9" cy="9" r="7" />
            <path d="M5.500 10.500C6.500 14 11.500 14 12.500 10.500M6.500 5.500V8M11.500 5.500V8" />
          </svg>
        </ImeButton>
        <ImeButton aria-label="语音">
          <svg width="18" height="18" fill="none" stroke="currentColor" strokeWidth="1.800">
            <rect x="6.500" y="1.500" width="5" height="9" rx="2.500" fill="currentColor" />
            <path d="M3.500 8C3.500 15 14.500 15 14.500 8M9 13V17M6 16.500H12" />
          </svg>
        </ImeButton>
        <ImeButton aria-label="软键盘">
          <svg width="18" height="18">
            <rect x="1" y="3" width="16" height="12" rx="1" fill="currentColor" />
            <path d="M3 6H15M3 9H15" stroke="#fff" strokeWidth="1.500" strokeDasharray="2 1" />
            <path d="M5 12.500H13" stroke="#fff" strokeWidth="1.500" />
          </svg>
        </ImeButton>
        <ImeButton aria-label="用户">
          <svg width="20" height="18" fill="#b4bcd4">
            <circle cx="7" cy="6" r="3.200" />
            <path d="M1 15C1 10 5 10 8 10V15Z" />
            <path d="M6.500 10.500H18.500V16.500H6.500ZM11.500 11V16M8 12.500H10.500V14.500H8" fill="#fff" stroke="#b4bcd4" />
          </svg>
        </ImeButton>
        <ImeButton aria-label="皮肤">
          <svg width="18" height="18">
            <path d="M6 2.500C7 4.500 11 4.500 12 2.500L16.500 5L15 9L13 8.500V16H5V8.500L3 9L1.500 5Z" fill="currentColor" />
          </svg>
        </ImeButton>
        <ImeButton aria-label="工具箱">
          <svg width="18" height="18" fill="currentColor">
            <path d="M2 2H8V8H2ZM2 10H8V16H2ZM10 10H16V16H10Z" />
            <rect x="10.800" y="2.800" width="4.500" height="4.500" fill="none" stroke="currentColor" strokeWidth="1.500" />
          </svg>
        </ImeButton>
      </ImeBar>

      <SpeedBall>58</SpeedBall>
    </Window>
  );
}
